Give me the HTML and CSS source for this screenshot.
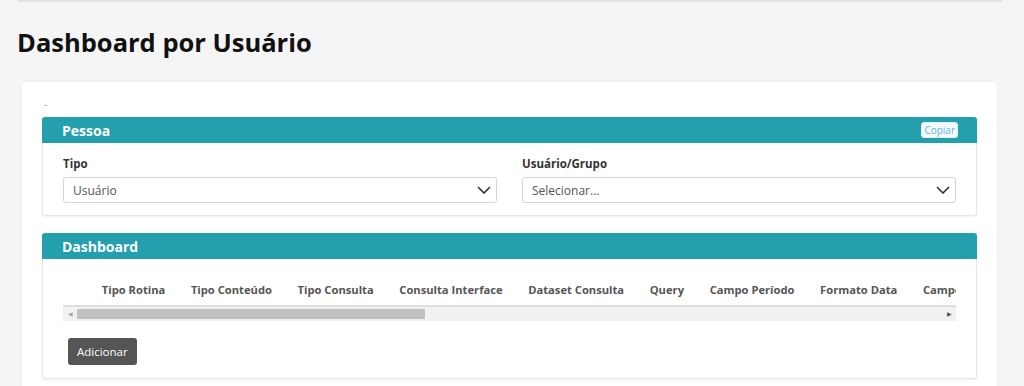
FILE: index.html
```html
<!DOCTYPE html>
<html lang="pt-BR">
  <head>
    <meta charset="UTF-8" />
    <meta name="viewport" content="width=device-width, initial-scale=1.0" />
    <title>Dashboard por Usuário</title>
    <link rel="stylesheet" href="styles.css">
  </head>
  <body>
    <div class="topbar"></div>
    <div class="page">
      <h1 class="page-title">Dashboard por Usuário</h1>

      <div class="card">
        <div class="dash">-</div>

        <div class="panel">
          <div class="panel-heading">
            <span class="panel-title">Pessoa</span>
            <button class="btn-copy">Copiar</button>
          </div>
          <div class="panel-body">
            <div class="form-row">
              <div class="form-group">
                <label class="form-label">Tipo</label>
                <div class="select">
                  <span>Usuário</span>
                  <svg class="chevron" width="14" height="8" viewBox="0 0 14 8">
                    <polyline points="1,1 7,7 13,1" fill="none" stroke="#333" stroke-width="1.6" />
                  </svg>
                </div>
              </div>
              <div class="form-group">
                <label class="form-label">Usuário/Grupo</label>
                <div class="select">
                  <span>Selecionar...</span>
                  <svg class="chevron" width="14" height="8" viewBox="0 0 14 8">
                    <polyline points="1,1 7,7 13,1" fill="none" stroke="#333" stroke-width="1.6" />
                  </svg>
                </div>
              </div>
            </div>
          </div>
        </div>

        <div class="panel">
          <div class="panel-heading">
            <span class="panel-title">Dashboard</span>
          </div>
          <div class="panel-body table-body">
            <div class="table-wrap">
              <table class="grid">
                <thead>
                  <tr>
                    <th class="col-actions"><div class="spacer"></div></th>
                    <th>Tipo Rotina</th>
                    <th>Tipo Conteúdo</th>
                    <th>Tipo Consulta</th>
                    <th>Consulta Interface</th>
                    <th>Dataset Consulta</th>
                    <th>Query</th>
                    <th>Campo Período</th>
                    <th>Formato Data</th>
                    <th>Campo Usuário</th>
                  </tr>
                </thead>
              </table>
            </div>
            <div class="scrollbar">
              <span class="scroll-arrow left">&#9664;</span>
              <div class="scroll-track">
                <div class="scroll-thumb"></div>
              </div>
              <span class="scroll-arrow right">&#9654;</span>
            </div>
            <button class="btn-add">Adicionar</button>
          </div>
        </div>
      </div>
    </div>
  </body>
</html>
```

FILE: styles.css
```css
* {
  margin: 0;
  padding: 0;
  box-sizing: border-box;
}

body {
  font-family: "Open Sans", "Liberation Sans", sans-serif;
  background-color: #f5f5f5;
  color: #333;
  overflow: hidden;
}

.topbar {
  height: 2px;
  margin: 0 22px 0 18px;
  background-color: #e1e1e1;
}

.page {
  padding: 0 27px 0 22px;
}

.page-title {
  font-size: 25.5px;
  font-weight: 700;
  line-height: 33px;
  color: #111;
  margin: 24px 0 23px -5px;
}

.card {
  background-color: #fff;
  border-radius: 4px;
  box-shadow: 0 0 2px rgba(0, 0, 0, 0.08);
  padding: 14px 20px 20px;
}

.dash {
  font-size: 10px;
  line-height: 16px;
  height: 21px;
  color: #999;
  padding-left: 2px;
}

.panel {
  margin-bottom: 17px;
}

.panel-heading {
  display: flex;
  justify-content: space-between;
  align-items: center;
  height: 26px;
  padding: 0 19px 0 20px;
  background-color: #239fad;
  border-radius: 3px 3px 0 0;
}

.panel-title {
  font-size: 14px;
  font-weight: 700;
  color: #fff;
}

.btn-copy {
  font-family: inherit;
  font-size: 10px;
  line-height: 14px;
  padding: 0 2px;
  color: #5bb8dc;
  background-color: #f5fbfc;
  border: 1px solid #e3f1f3;
  border-radius: 3px;
}

.panel-body {
  border: 1px solid #e6e6e6;
  border-top: none;
  border-radius: 0 0 3px 3px;
  box-shadow: 0 1px 2px rgba(0, 0, 0, 0.06);
  padding: 12px 20px 12px;
}

.form-row {
  display: flex;
  gap: 25px;
}

.form-group {
  flex: 1;
}

.form-label {
  display: block;
  font-size: 11.5px;
  font-weight: 700;
  line-height: 17px;
  color: #333;
  margin-bottom: 5px;
}

.select {
  display: flex;
  justify-content: space-between;
  align-items: center;
  height: 26px;
  padding: 0 5px 0 9px;
  border: 1px solid #d5d5d5;
  border-radius: 3px;
  font-size: 12px;
  color: #555;
}

.table-body {
  padding-top: 18px;
  padding-bottom: 13px;
}

.table-wrap {
  overflow: hidden;
  border-bottom: 2px solid #dedede;
}

.grid {
  border-collapse: collapse;
  width: max-content;
}

.grid th {
  font-size: 11.2px;
  font-weight: 700;
  color: #555;
  line-height: 18px;
  padding: 4px 12.8px 6px;
  white-space: nowrap;
  text-align: left;
}

.grid th.col-actions {
  padding: 0;
}

.spacer {
  width: 26px;
}

.scrollbar {
  display: flex;
  align-items: center;
  height: 14px;
  background-color: #f1f1f1;
}

.scroll-arrow {
  width: 14px;
  text-align: center;
  font-size: 6px;
  color: #a3a3a3;
}

.scroll-arrow.right {
  color: #505050;
}

.scroll-track {
  flex: 1;
  height: 10px;
}

.scroll-thumb {
  width: 348px;
  height: 10px;
  background-color: #c1c1c1;
}

.btn-add {
  font-family: inherit;
  font-size: 11.5px;
  line-height: 17px;
  color: #fff;
  background-color: #555;
  border: none;
  border-radius: 3px;
  padding: 5px 9px;
  margin: 17px 0 0 5px;
}
```
